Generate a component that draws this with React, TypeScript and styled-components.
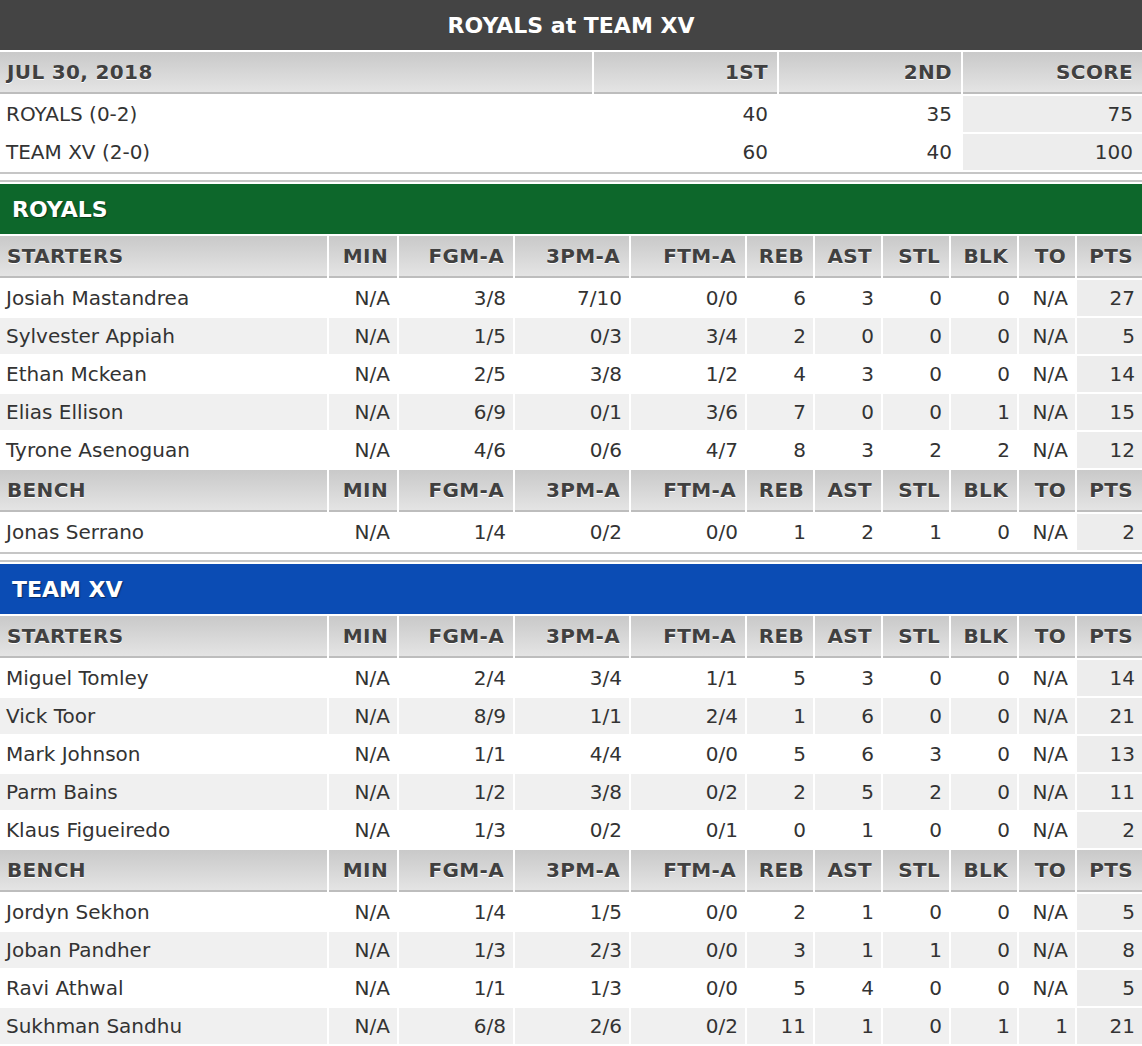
import React from "react";
import styled, { createGlobalStyle } from "styled-components";

const GlobalStyle = createGlobalStyle`
  html, body { margin: 0; padding: 0; background: #fff; }
  body { font-family: "DejaVu Sans", Verdana, sans-serif; color: #333; }
`;

const Page = styled.div`
  width: 1142px;
  display: flex;
  flex-direction: column;
`;

const TitleBar = styled.div`
  height: 50px;
  background: #444;
  color: #fff;
  font-weight: bold;
  font-size: 22px;
  display: flex;
  align-items: center;
  justify-content: center;
  margin-bottom: 2px;
`;

const Grid = styled.div<{ $cols: string }>`
  display: grid;
  grid-template-columns: ${(p) => p.$cols};
  gap: 2px;
`;

const HeadCell = styled.div<{ $left?: boolean }>`
  height: 40px;
  border-bottom: 2px solid #bdbdbd;
  background: linear-gradient(to bottom, #c9c9c9, #e4e4e4);
  color: #404040;
  font-weight: bold;
  font-size: 20px;
  letter-spacing: 0.35px;
  text-shadow: 0 1px 0 #fff;
  display: flex;
  align-items: center;
  justify-content: ${(p) => (p.$left ? "flex-start" : "flex-end")};
  padding: ${(p) => (p.$left ? "0 0 0 7px" : "0 9px 0 0")};
  white-space: nowrap;
`;

const Cell = styled.div<{ $left?: boolean; $shade?: "none" | "row" | "total"; $pr?: number }>`
  height: 36px;
  font-size: 20px;
  color: #333;
  display: flex;
  align-items: center;
  justify-content: ${(p) => (p.$left ? "flex-start" : "flex-end")};
  padding: ${(p) => (p.$left ? "0 0 0 6px" : `0 ${p.$pr ?? 7}px 0 0`)};
  background: ${(p) =>
    p.$shade === "total" ? "#ededed" : p.$shade === "row" ? "#f0f0f0" : "#fff"};
  white-space: nowrap;
`;

const DoubleRule = styled.div`
  height: 6px;
  border-top: 2px solid #c6c6c6;
  border-bottom: 2px solid #c6c6c6;
  margin: 2px 0;
`;

const TeamBar = styled.div<{ $color: string }>`
  height: 50px;
  background: ${(p) => p.$color};
  color: #fff;
  font-weight: bold;
  font-size: 22px;
  display: flex;
  align-items: center;
  padding-left: 12px;
  text-shadow: 1px 1px 1px rgba(0, 0, 0, 0.45);
  margin-bottom: 2px;
`;

const SCORE_COLS = "592px 183px 182px 1fr";
const STAT_COLS = "327px 68px 114px 114px 114px 66px 66px 66px 66px 56px 1fr";
const STAT_HEAD = ["MIN", "FGM-A", "3PM-A", "FTM-A", "REB", "AST", "STL", "BLK", "TO", "PTS"];

type Player = [string, string, string, string, string, string, string, string, string, string, string];

interface Team {
  name: string;
  color: string;
  starters: Player[];
  bench: Player[];
}

const teams: Team[] = [
  {
    name: "ROYALS",
    color: "#0d672b",
    starters: [
      ["Josiah Mastandrea", "N/A", "3/8", "7/10", "0/0", "6", "3", "0", "0", "N/A", "27"],
      ["Sylvester Appiah", "N/A", "1/5", "0/3", "3/4", "2", "0", "0", "0", "N/A", "5"],
      ["Ethan Mckean", "N/A", "2/5", "3/8", "1/2", "4", "3", "0", "0", "N/A", "14"],
      ["Elias Ellison", "N/A", "6/9", "0/1", "3/6", "7", "0", "0", "1", "N/A", "15"],
      ["Tyrone Asenoguan", "N/A", "4/6", "0/6", "4/7", "8", "3", "2", "2", "N/A", "12"],
    ],
    bench: [["Jonas Serrano", "N/A", "1/4", "0/2", "0/0", "1", "2", "1", "0", "N/A", "2"]],
  },
  {
    name: "TEAM XV",
    color: "#0b4cb4",
    starters: [
      ["Miguel Tomley", "N/A", "2/4", "3/4", "1/1", "5", "3", "0", "0", "N/A", "14"],
      ["Vick Toor", "N/A", "8/9", "1/1", "2/4", "1", "6", "0", "0", "N/A", "21"],
      ["Mark Johnson", "N/A", "1/1", "4/4", "0/0", "5", "6", "3", "0", "N/A", "13"],
      ["Parm Bains", "N/A", "1/2", "3/8", "0/2", "2", "5", "2", "0", "N/A", "11"],
      ["Klaus Figueiredo", "N/A", "1/3", "0/2", "0/1", "0", "1", "0", "0", "N/A", "2"],
    ],
    bench: [
      ["Jordyn Sekhon", "N/A", "1/4", "1/5", "0/0", "2", "1", "0", "0", "N/A", "5"],
      ["Joban Pandher", "N/A", "1/3", "2/3", "0/0", "3", "1", "1", "0", "N/A", "8"],
      ["Ravi Athwal", "N/A", "1/1", "1/3", "0/0", "5", "4", "0", "0", "N/A", "5"],
      ["Sukhman Sandhu", "N/A", "6/8", "2/6", "0/2", "11", "1", "0", "1", "1", "21"],
    ],
  },
];

const StatGroup: React.FC<{ label: string; players: Player[] }> = ({ label, players }) => (
  <>
    <HeadCell $left>{label}</HeadCell>
    {STAT_HEAD.map((h) => (
      <HeadCell key={h}>{h}</HeadCell>
    ))}
    {players.map((p, ri) =>
      p.map((v, ci) => (
        <Cell
          key={`${ri}-${ci}`}
          $left={ci === 0}
          $shade={ci === 10 ? "total" : ri % 2 === 1 ? "row" : "none"}
        >
          {v}
        </Cell>
      ))
    )}
  </>
);

const TeamSection: React.FC<{ team: Team }> = ({ team }) => (
  <section>
    <TeamBar $color={team.color}>{team.name}</TeamBar>
    <Grid $cols={STAT_COLS}>
      <StatGroup label="STARTERS" players={team.starters} />
      <StatGroup label="BENCH" players={team.bench} />
    </Grid>
    <DoubleRule />
  </section>
);

const scores = [
  ["ROYALS (0-2)", "40", "35", "75"],
  ["TEAM XV (2-0)", "60", "40", "100"],
];

export default function App() {
  return (
    <Page>
      <GlobalStyle />
      <TitleBar>ROYALS at TEAM XV</TitleBar>
      <Grid $cols={SCORE_COLS}>
        <HeadCell $left>JUL 30, 2018</HeadCell>
        <HeadCell>1ST</HeadCell>
        <HeadCell>2ND</HeadCell>
        <HeadCell>SCORE</HeadCell>
        {scores.map((r, ri) =>
          r.map((v, ci) => (
            <Cell key={`${ri}-${ci}`} $left={ci === 0} $pr={9} $shade={ci === 3 ? "total" : "none"}>
              {v}
            </Cell>
          ))
        )}
      </Grid>
      <DoubleRule />
      {teams.map((t) => (
        <TeamSection key={t.name} team={t} />
      ))}
    </Page>
  );
}
